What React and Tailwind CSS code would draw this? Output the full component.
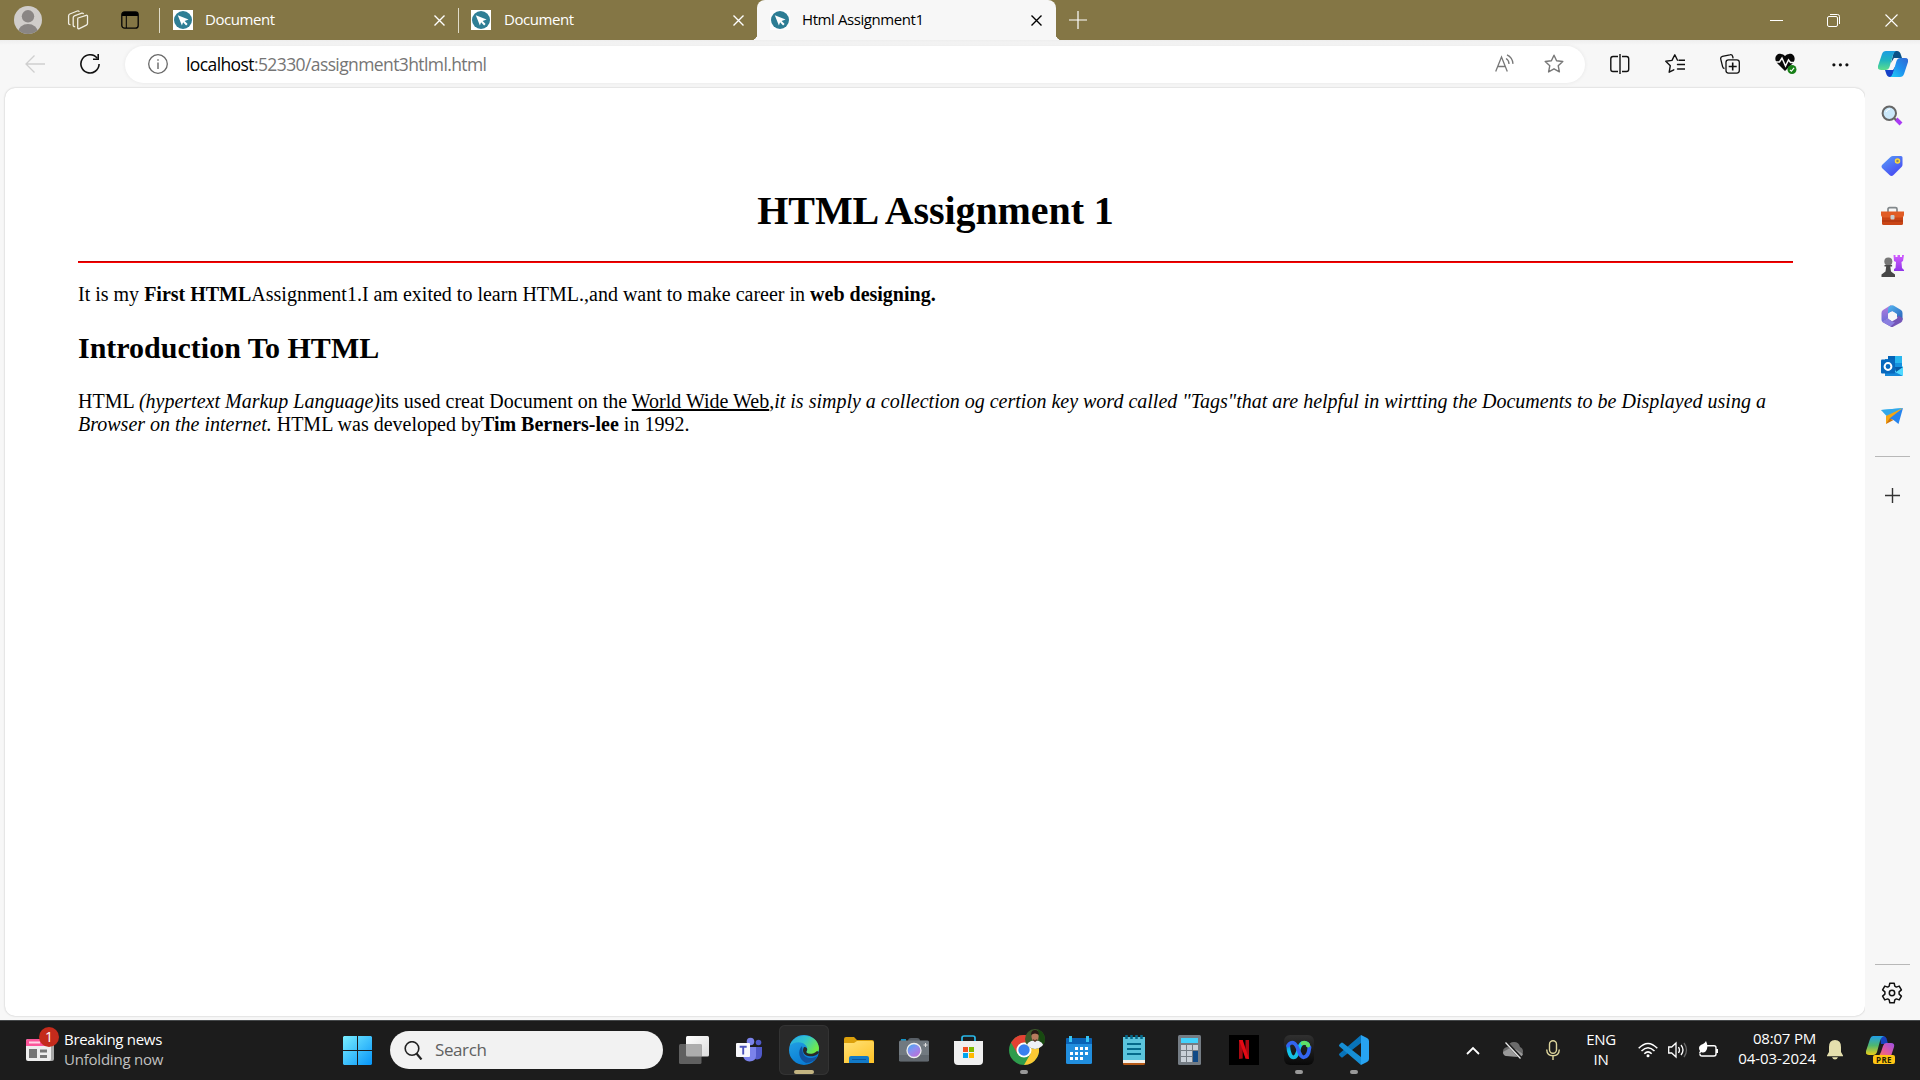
import React from "react";

function Svg({ w, h = w, className = "", children, ...rest }) {
  return (
    <svg width={w} height={h} viewBox={`0 0 ${w} ${h}`} fill="none" className={`block shrink-0 ${className}`} {...rest}>
      {children}
    </svg>
  );
}

function Favicon() {
  return (
    <Svg w={20}>
      <rect width="20" height="20" fill="#fff" />
      <circle cx="10" cy="10" r="9" fill="#2e7e95" />
      <path d="M4.8 5.2 15.6 9.4l-4 1.5 3 3-1.5 1.5-3-3.1-1.2 3.3z" fill="#fff" />
    </Svg>
  );
}

function Cross({ size = 11, stroke = 1.4 }) {
  return (
    <Svg w={size}>
      <path d={`M.5 .5 ${size - 0.5} ${size - 0.5}M${size - 0.5} .5 .5 ${size - 0.5}`} stroke="currentColor" strokeWidth={stroke} />
    </Svg>
  );
}

function Tab({ title, className, textClass }) {
  return (
    <div className={`relative flex h-10 shrink-0 items-center ${className}`}>
      <Favicon />
      <span className={`mb-[2px] flex-1 whitespace-nowrap text-[15px] leading-5 ${textClass}`}>{title}</span>
      <Cross />
    </div>
  );
}

function TitleBar() {
  return (
    <header className="flex h-10 shrink-0 bg-[#847645] text-white">
      <div className="flex w-[159px] shrink-0 items-center">
        <Svg w={28} className="ml-[14px]">
          <clipPath id="avatar"><circle cx="14" cy="14" r="14" /></clipPath>
          <g clipPath="url(#avatar)">
            <rect width="28" height="28" fill="#d0cdca" />
            <circle cx="14" cy="10.3" r="6.2" fill="#8a8684" />
            <ellipse cx="14" cy="26.5" rx="10" ry="8.5" fill="#8a8684" />
          </g>
        </Svg>
        <Svg w={22} className="ml-[25px]" stroke="#f1eee4" strokeWidth="1.3" strokeLinejoin="round">
          <path d="m11 9 8.2-2.7c.9-.3 1.3.2 1.3 1v7.2c0 .8-.4 1.3-1.1 1.6l-7.1 3.5c-.9.4-1.6 0-1.6-.9v-8c0-.8 0-1.4.3-1.7z" />
          <path d="M8.2 17.5c-1.2.3-2-.2-2-1.2V8.8c0-1 .3-1.6 1.2-2l7.4-2.6c1-.3 1.5.2 1.6 1" />
          <path d="M3.5 15.6c-1.3.2-1.9-.4-1.9-1.4V7c0-1 .3-1.6 1.2-2l7.5-3c1-.4 1.8 0 1.9.9" />
        </Svg>
        <Svg w={18} className="ml-[32px]">
          <rect x=".8" y=".8" width="16.4" height="16.4" rx="2.8" stroke="#050505" strokeWidth="1.3" />
          <path d="M1 5V3Q1 1 3 1h12q2 0 2 2v2z" fill="#000" />
          <path d="M5.3 5v12" stroke="#000" />
        </Svg>
      </div>
      <Tab title="Document" className="w-[299px] pl-[14px] pr-[13px] before:absolute before:left-0 before:top-2 before:h-[25px] before:w-px before:bg-[#e0dcc9]" textClass="ml-3 tracking-[-0.45px]" />
      <Tab title="Document" className="w-[299px] pl-[13px] pr-[13px] before:absolute before:left-0 before:top-2 before:h-[25px] before:w-px before:bg-[#e0dcc9]" textClass="ml-[13px] tracking-[-0.45px]" />
      <div className="relative h-10 shrink-0 rounded-t-lg bg-[#f7f7f7] text-black">
        <span className="absolute -left-[6px] bottom-0 size-[6px] bg-[radial-gradient(circle_at_0_0,transparent_6px,#f7f7f7_6.5px)]" />
        <span className="absolute -right-[6px] bottom-0 size-[6px] bg-[radial-gradient(circle_at_100%_0,transparent_6px,#f7f7f7_6.5px)]" />
        <Tab title="Html Assignment1" className="w-[299px] pl-[13px] pr-[14px]" textClass="ml-3 tracking-[-0.42px]" />
      </div>
      <div className="flex flex-1 items-center pl-[13px]">
        <Svg w={18}><path d="M9 0v18M0 9h18" stroke="#fff" strokeWidth="1.2" /></Svg>
      </div>
      <div className="flex items-center pr-[22px] text-white">
        <Svg w={13} className="mr-[44px]"><path d="M0 6.5h13" stroke="#fff" /></Svg>
        <Svg w={13} className="mr-[45px]" stroke="#fff">
          <rect x=".5" y="2.5" width="10" height="10" rx="1.5" />
          <path d="M3 .5h7.5q2 0 2 2V10" />
        </Svg>
        <Cross size={13} stroke={1.1} />
      </div>
    </header>
  );
}

const STAR = "m10 1.2 2.6 5.6 6.2.7-4.6 4.2 1.2 6.2L10 14.8l-5.4 3.1 1.2-6.2L1.2 7.5l6.2-.7z";

function Toolbar() {
  return (
    <div className="flex h-12 shrink-0 items-center bg-[linear-gradient(#eeeeee,#f7f7f7_5px)]">
      <Svg w={20} className="ml-[25px]"><path d="M20 10H1M9.5 1.5 1 10l8.5 8.5" stroke="#cfcfcf" strokeWidth="1.3" /></Svg>
      <Svg w={20} className="ml-[35px]" stroke="#111" strokeWidth="1.6">
        <path d="M17.2 4.3A9.1 9.1 0 1 0 19.1 10" />
        <path d="M18.2 0v5.2H13" />
      </Svg>
      <div className="ml-[25px] flex h-[37px] w-[1460px] items-center rounded-full bg-white shadow-[0_0_4px_rgba(0,0,0,0.07)]">
        <Svg w={20} className="ml-[23px]" stroke="#686868">
          <circle cx="10" cy="10" r="9.3" strokeWidth="1.3" />
          <path d="M10 8.6V15M10 5.2v1.6" strokeWidth="1.4" />
        </Svg>
        <span className="mb-px ml-[18px] flex-1 whitespace-nowrap text-[17.5px] leading-6 tracking-[-0.6px] text-[#757575]">
          <span className="text-black">localhost</span>:52330/assignment3htlml.html
        </span>
        <Svg w={20} className="mr-[29px]" stroke="#777" strokeWidth="1.3">
          <path d="M.7 17.5 6.5 3l5.8 14.5M2.8 12.5h7.4M11 4.5q3 1.700 3 5.500M12 .9q5.500 2.500 6 9" />
        </Svg>
        <Svg w={20} className="mr-[21px]"><path d={STAR} stroke="#777" strokeWidth="1.4" strokeLinejoin="round" /></Svg>
      </div>
      <div className="flex items-center pl-[25px] text-black">
        <Svg w={20} stroke="#111" strokeWidth="1.4">
          <path d="M8 2.500H3q-2.200 0-2.200 2.200v10.600q0 2.200 2.200 2.200h5M12 2.500h4.500q2.200 0 2.200 2.200v10.600q0 2.200-2.200 2.200H12M10 0v20" />
        </Svg>
        <Svg w={20} className="ml-[35px]" stroke="#111" strokeWidth="1.400" strokeLinejoin="round" strokeLinecap="round">
          <path d="M12.500 6.200 9.800.8 7 6.400l-6.200.9 4.500 4.400-1.100 6.500 4.600-2.400M14 6.200h6M12.500 10.500H20M12.500 15H20" />
        </Svg>
        <Svg w={20} className="ml-[35px]" stroke="#111" strokeWidth="1.300">
          <path d="M4.500 14.500c-1.200-.1-1.600-.7-1.900-1.900L.8 5.300c-.4-1.600.1-2.500 1.600-2.900L9.800.8c1.600-.4 2.500.2 2.900 1.700l.4 1.900" />
          <rect x="6" y="5.800" width="13.300" height="13.300" rx="2.500" />
          <path d="M12.700 8.500v8M8.700 12.500h8" strokeWidth="1.600" />
        </Svg>
        <Svg w={22} className="ml-[35px]">
          <path d="M10 18 2 10C-2 5 2 0 6 1q2.300.2 4 2 1.700-1.800 4-2c4-1 8 4 4 9z" fill="#080808" />
          <path d="M0 9h4.500l2.500-4 3.500 8 3-6 2 2.500H20" stroke="#f7f7f7" strokeWidth="1.500" />
          <circle cx="17" cy="16.500" r="4.500" fill="#188018" />
          <path d="m14.900 16.800 1.500 1.300 2.700-3.200" stroke="#fff" strokeWidth="1.100" />
        </Svg>
        <Svg w={17} className="ml-[35px]"><g fill="#111"><circle cx="1.900" cy="8.800" r="1.600" /><circle cx="8.400" cy="8.800" r="1.600" /><circle cx="14.900" cy="8.800" r="1.600" /></g></Svg>
      </div>
    </div>
  );
}

function Page() {
  return (
    <main className="ml-[5px] h-[928px] w-[1860px] rounded-[10px] bg-white pl-[73px] pr-[72px] pt-[100px] font-['Liberation_Serif',serif] text-[20px] leading-[23px] text-black shadow-[0_0_2px_rgba(0,0,0,0.25)]">
      <h1 className="text-center text-[40px] font-bold leading-[46px] tracking-[-0.08px]">HTML Assignment 1</h1>
      <hr className="mt-[27px] h-[2px] border-0 border-t border-t-[#c80000] bg-[#ff0000]" />
      <p className="mt-[20px] whitespace-nowrap">
        It is my <b>First HTML</b>Assignment1.I am exited to learn HTML.,and want to make career in <b>web designing.</b>
      </p>
      <h2 className="mt-[25px] text-[30px] font-bold leading-[34px]">Introduction To HTML</h2>
      <p className="mt-[25px] whitespace-nowrap">
        HTML <i>(hypertext Markup Language)</i>its used creat Document on the <u className="decoration-2 underline-offset-1">World Wide Web</u>,
        <i>it is simply a collection og certion key word called "Tags"that are helpful in wirtting the Documents to be Displayed using a<br />Browser on the internet.</i> HTML was developed by<b>Tim Berners-lee</b> in 1992.
      </p>
    </main>
  );
}

function Sidebar() {
  return (
    <aside className="flex w-[55px] shrink-0 flex-col items-center bg-[linear-gradient(#eeeeee,#f7f7f7_5px)]">
      <Svg w={30} h={26} className="mt-[11px]">
        <defs>
          <linearGradient id="cpa" x1="0" y1="0" x2="0" y2="1"><stop stopColor="#1b9de2" /><stop offset=".5" stopColor="#20b5bf" /><stop offset="1" stopColor="#5dde8c" /></linearGradient>
          <linearGradient id="cpb" x1="1" y1="0" x2="0" y2="1"><stop stopColor="#3367d1" /><stop offset=".5" stopColor="#1e91ef" /><stop offset="1" stopColor="#20cff5" /></linearGradient>
        </defs>
        <path d="M16 0h3q3 0 4 4l1 3h-8l-3 5z" fill="#0a5287" />
        <path d="M14 26h-2q-3 0-4-4l-1-3h8l3-5z" fill="#1541c8" />
        <path d="M8 0h10q-2 1-3 4l-3.500 12q-1 3-4 3H3q-4 0-3-4L4 3q1-3 4-3z" fill="url(#cpa)" />
        <path d="M22 26H12q2-1 3-4l3.500-12q1-3 4-3H27q4 0 3 4l-4 12q-1 3-4 3z" fill="url(#cpb)" />
      </Svg>
      <div className="mr-px flex flex-col items-center gap-[28px] pt-[28px]">
        <Svg w={22}>
          <path d="m15 14 5 5" stroke="#aa3bf4" strokeWidth="4" strokeLinecap="butt" />
          <path d="m12.500 12.500 2.500 2.500" stroke="#666" strokeWidth="2" />
          <circle cx="8.300" cy="8.300" r="6.700" fill="#cbe8fa" stroke="#666" strokeWidth="2" />
          <path d="M5 7q1-2.500 4-3" stroke="#fff" />
        </Svg>
        <Svg w={22}>
          <defs><linearGradient id="tag" x2=".7" y2="1"><stop stopColor="#59a1f8" /><stop offset="1" stopColor="#4747f2" /></linearGradient></defs>
          <path d="M12 1h8q1.500 0 1.500 1.500v7q0 1.500-1 2.500l-8 8q-2 2-4 0l-7-6.500q-2-2 0-4l8-7.500q1-1 2.500-1z" fill="url(#tag)" />
          <circle cx="16.500" cy="6" r="2" fill="#8a8b69" stroke="#ffd83c" strokeWidth="1.500" />
        </Svg>
        <Svg w={23} h={22}>
          <path d="M7 7V4q0-1.300 1.500-1.300h6Q16 2.700 16 4v3" stroke="#82888b" strokeWidth="1.700" />
          <rect x="1" y="10" width="21" height="10" rx="1.500" fill="#c94516" />
          <path d="M0 6.500h23v3q0 3-3 3H3q-3 0-3-3z" fill="#e15c25" />
          <path d="M1 16h21" stroke="#a7330e" /><rect x="9.500" y="10" width="4" height="4.500" rx="1" fill="#c7ced0" />
        </Svg>
        <Svg w={23} h={22}>
          <defs><linearGradient id="rook" x2="0" y2="1"><stop stopColor="#d25cff" /><stop offset="1" stopColor="#8f36e8" /></linearGradient></defs>
          <path d="M12.500 0h2v2h2V0H19v2h2V0h2l-1 6-1.500 1 .5 6 2 2v1h-10v-2l1.500-1 .5-6-2-1z" fill="url(#rook)" />
          <circle cx="7.300" cy="6.500" r="4" fill="#777" />
          <path d="M3.500 10h7.600v1.500H9.300l.7 5 4 3V22H.5v-2.500l4-3 .7-5H3.500z" fill="#474747" />
        </Svg>
        <Svg w={22}>
          <defs>
            <linearGradient id="mb" x2="1" y2="1"><stop stopColor="#56b8f2" /><stop offset="1" stopColor="#285fb8" /></linearGradient>
            <linearGradient id="mp" x2="0" y2="1"><stop stopColor="#b87bdc" /><stop offset="1" stopColor="#6a6fd8" /></linearGradient>
          </defs>
          <path d="M10 0 2 5Q.5 6 .5 8v6.500q0 1.500 1 2.500l5.500-3.500V8.500L13 5z" fill="url(#mp)" />
          <path d="m8 1.500 2-1q1-.7 2.500 0L20 5q1.500 1 1.500 3v7L16 12V9L11 6 7 8.500V4q0-1.500 1-2.500z" fill="url(#mb)" />
          <path d="m1.500 17 5.500-3.500 4 3 5-3 1-3 4.500 2.500q.5 3-1.500 4.500l-7.500 4q-1.500 1-3 0z" fill="#7556b8" />
          <path d="m1.500 17 5.500-3.500 4 3 3 1-4.500 4z" fill="#8a7fe0" />
          <circle cx="11" cy="11" r="3.900" fill="#f7f7f7" />
        </Svg>
        <Svg w={22}>
          <path d="M7 1h14v20H4V4h3z" fill="#1490df" /><path d="M7 1h7v7H7z" fill="#0364b8" /><path d="M14 1h7v7h-7z" fill="#28b7ef" />
          <path d="M4 12h18v7q0 2-2 2H4z" fill="#1688d9" /><path d="m22 11-9 5.500 9 4.500z" fill="#50d9ff" /><path d="m14 12 8 0-7 5z" fill="#075ba6" />
          <rect y="4.500" width="14" height="14" rx="1" fill="#0868bd" />
          <circle cx="7" cy="11.500" r="3.400" stroke="#fff" strokeWidth="2" />
        </Svg>
        <Svg w={23} h={22}>
          <path d="M0 5 22 3 11 9.500z" fill="#45c0f5" /><path d="m0 5 6 6.500L22 3z" fill="#33a8ea" />
          <path d="M22 3 5 11v8z" fill="#f5a513" /><path d="M22 3 8.500 13.500l4 1.500 5 4z" fill="#2684ee" /><path d="m5 19 3.500-5.500 4 1.500z" fill="#cf730b" />
        </Svg>
      </div>
      <div className="mt-[29px] h-px w-[35px] bg-[#b8b8b8]" />
      <Svg w={15} className="mr-px mt-[31px]"><path d="M7.500 0v15M0 7.500h15" stroke="#333" strokeWidth="1.400" /></Svg>
      <div className="mt-auto h-px w-[35px] bg-[#b8b8b8]" />
      <Svg w={22} className="mb-[16px] mr-px mt-[17px]" stroke="#111" strokeWidth="1.500" strokeLinejoin="round">
        <path d="M8.800 1.200h4.400l.6 3 1.500.9 2.900-1 2.200 3.800-2.300 2v2.200l2.300 2-2.200 3.800-2.900-1-1.500.9-.6 3H8.800l-.6-3-1.500-.9-2.900 1-2.200-3.800 2.300-2V9.900l-2.300-2 2.200-3.800 2.900 1 1.500-.9z" />
        <circle cx="11" cy="11" r="2.700" />
      </Svg>
    </aside>
  );
}

function Slot({ indicator, active, children }) {
  return (
    <div className={`relative mr-[5px] flex h-[50px] w-[50px] shrink-0 items-center justify-center rounded-md ${active ? "bg-[#292929] ring-1 ring-inset ring-[#333333]" : ""}`}>
      {children}
      {active && <span className="absolute bottom-px h-1 w-5 rounded-full bg-[#c4b582]" />}
      {indicator && <span className="absolute bottom-px h-1 w-2 rounded-full bg-[#999999]" />}
    </div>
  );
}

function Apps() {
  return (
    <div className="ml-[6px] flex">
      <Slot><Svg w={30}>
        <defs><linearGradient id="tv" x2="1" y2="1"><stop stopColor="#fff" /><stop offset="1" stopColor="#dcdcdc" /></linearGradient></defs>
        <rect x="7" y="1" width="23" height="20.500" rx="1.500" fill="url(#tv)" /><rect y="9" width="22.500" height="20" rx="1.500" fill="#606060" /><path d="M7 9h15.500v12.500H8.500Q7 21.500 7 20z" fill="#adadad" />
      </Svg></Slot>
      <Slot><Svg w={30} className="mr-[2px]">
        <circle cx="17.500" cy="6.500" r="3.800" fill="#7b83eb" /><circle cx="25.500" cy="7.500" r="2.800" fill="#5059c9" />
        <path d="M20 12h9v7q0 5-5 5.500l-4-1z" fill="#5059c9" /><path d="M10 12h13v9q0 5-6.500 5.500Q11 26 10 21z" fill="#7b83eb" />
        <rect x="3" y="8" width="14" height="14" rx="1" fill="#f8f8fc" /><path d="M6.700 11.800h7M10.200 12v7.500" stroke="#4b53bc" strokeWidth="1.900" />
      </Svg></Slot>
      <Slot active><Svg w={30}>
        <defs>
          <linearGradient id="ea" x2="1" y2=".5"><stop stopColor="#26a9e6" /><stop offset=".5" stopColor="#32c5cd" /><stop offset="1" stopColor="#70ea4a" /></linearGradient>
          <linearGradient id="eb" x2=".5" y2="1"><stop stopColor="#27a7e6" /><stop offset="1" stopColor="#087bd4" /></linearGradient>
        </defs>
        <circle cx="15" cy="15" r="15" fill="url(#eb)" />
        <path d="M1 10.500C4-3 29-3 30 13c0 7-8 8-12 5.500-1-.7-1-1.300 0-2.500C20 8 8 4 1 10.500z" fill="url(#ea)" />
        <path d="M13 11c-5 5-3 14 4 17 5 0 10-3 11.500-7-7 4-14 2-15-5q0-3-.5-5z" fill="#1153a0" />
        <path d="M15 12c-2 3-1 8 4 9 4 1 7-.2 9-1.500q1.500-1 2-2.500l-2-1c-3 3-8 3.500-10 2-1-.7-.8-1.500 0-2.400q1-3.600-3-3.600z" fill="#292929" />
      </Svg></Slot>
      <Slot><Svg w={30}>
        <path d="M0 4q0-2 2-2h8l3 3h15q2 0 2 2v4H0z" fill="#dca00b" />
        <defs><linearGradient id="fo" x2=".7" y2="1"><stop stopColor="#ffe177" /><stop offset="1" stopColor="#ffc52d" /></linearGradient></defs>
        <path d="M0 8h10l3-2h15q2 0 2 2v20H0z" fill="url(#fo)" /><path d="M5 28v-5q0-2 2-2h16q2 0 2 2v5z" fill="#127ac8" /><path d="M8 24.500h14" stroke="#0a559d" />
      </Svg></Slot>
      <Slot><Svg w={30}>
        <path d="M2 4h5v3H2z" fill="#1492c5" /><path d="M9 6q0-3 3-3h6q3 0 3 3z" fill="#596067" />
        <rect y="5.500" width="30" height="21" rx="1.500" fill="#717980" /><path d="M0 20h30v6H0z" fill="#626970" />
        <defs><linearGradient id="ln" x2=".7" y2="1"><stop stopColor="#32aef1" /><stop offset=".5" stopColor="#8a8ff0" /><stop offset="1" stopColor="#be6dd7" /></linearGradient></defs>
        <circle cx="15" cy="15.500" r="7" fill="url(#ln)" stroke="#eee" strokeWidth="1.300" /><path d="M26.500 8v4M24.500 10h4" stroke="#ddd" />
      </Svg></Slot>
      <Slot><Svg w={30}>
        <path d="M8 8V3q0-2 2-2h9q2 0 2 2v5" stroke="#28b8e9" strokeWidth="1.700" />
        <path d="M0 6h29v20q0 4-4 4H4q-4 0-4-4z" fill="#f0f0f0" />
        <path d="M9 12h5v5H9z" fill="#f25022" /><path d="M15 12h5v5h-5z" fill="#7fba00" /><path d="M9 18h5v5H9z" fill="#00a4ef" /><path d="M15 18h5v5h-5z" fill="#ffb900" />
      </Svg></Slot>
      <Slot indicator>
        <Svg w={30}>
          <circle cx="15" cy="15" r="15" fill="#2e9c4c" />
          <path d="M2 7.500A15 15 0 0 1 28 7.500H15L8.500 18.700z" fill="#e34133" /><path d="M15 7.500h13A15 15 0 0 1 15 30l6.500-11.300z" fill="#fbc934" />
          <circle cx="15" cy="15" r="7.500" fill="#fff" /><circle cx="15" cy="15" r="5.700" fill="#3980ee" />
        </Svg>
        <Svg w={20} className="absolute right-[4px] top-[4px]">
          <clipPath id="photo"><circle cx="10" cy="10" r="10" /></clipPath>
          <g clipPath="url(#photo)">
            <rect width="20" height="20" fill="#3d5a2c" /><path d="M13 0h7v15h-5z" fill="#174910" /><path d="M1 20q0-8.500 9-8.500t9 8.500z" fill="#eef1f7" />
            <ellipse cx="10" cy="7.500" rx="3.500" ry="4.800" fill="#b87b5e" /><path d="M6 6q0-5 4-5t4 5q-4-3-8 0z" fill="#271916" /><path d="M8 10q2 2 4 0v1.500L10 13l-2-1.500z" fill="#5a382c" />
          </g>
        </Svg>
      </Slot>
      <Slot><Svg w={26} h={28} className="-mt-px">
        <rect y="2" width="26" height="26" rx="1.500" fill="#218ede" /><path d="M0 8V3.500Q0 2 1.500 2h23Q26 2 26 3.500V8z" fill="#0963b6" />
        <path d="M4.500 0v6M21.500 0v6" stroke="#37c5f4" strokeWidth="3" />
        <path d="M9 11h3v3H9zm5 0h3v3h-3zm5 0h3v3h-3zM4 16h3v3H4zm5 0h3v3H9zm5 0h3v3h-3zm5 0h3v3h-3zM4 21h3v3H4zm5 0h3v3H9zm5 0h3v3h-3z" fill="#fff" />
      </Svg></Slot>
      <Slot><Svg w={22} h={30}>
        <rect y="2" width="22" height="28" rx="1.500" fill="#b65a18" /><path d="M0 25h22v3H0z" fill="#f4f2eb" /><path d="M0 2h22v23H0z" fill="#5bc4dc" />
        <path d="M4 9h14M4 14h14M4 19h14" stroke="#056a8b" strokeWidth="2" /><path d="M3.500 0v4M8.500 0v4M13.500 0v4M18.500 0v4" stroke="#056a8b" strokeWidth="2.500" />
      </Svg></Slot>
      <Slot><Svg w={23} h={30}>
        <rect width="23" height="30" rx="1.500" fill="#747c84" /><path d="M3 3h17v5H3z" fill="#42d2fc" />
        <path d="M3 10h5v5H3zm6 0h5v5H9zm6 0h5v5h-5zM3 16h5v5H3zm6 0h5v5H9zM3 22h5v5H3zm6 0h5v5H9z" fill="#c9d0d8" /><path d="M15 16h5v11h-5z" fill="#104986" />
      </Svg></Slot>
      <Slot><Svg w={30}>
        <path d="M0 0h30v30H0z" fill="#000" /><path d="M10 5h3.700v18.500L10 24zM16.500 5H20v19l-3.500-.5z" fill="#a90912" /><path d="M10 5h3.700L20 24l-3.500-.5z" fill="#e50914" />
      </Svg></Slot>
      <Slot indicator><Svg w={30}>
        <defs>
          <linearGradient id="wa" x2="0" y2="1"><stop stopColor="#303030" /><stop offset="1" stopColor="#080808" /></linearGradient>
          <linearGradient id="wb" gradientUnits="userSpaceOnUse" x1="4" y1="8" x2="15" y2="24"><stop stopColor="#1670d9" /><stop offset=".4" stopColor="#10c8ec" /><stop offset="1" stopColor="#19b6d8" /></linearGradient>
        </defs>
        <rect width="30" height="30" rx="6" fill="url(#wa)" />
        <path d="M4.200 11c.3 6 2.300 11.300 5.300 11.300 3.500 0 4.500-6 6-10.500 1-3 2.500-4 4.500-4 2.500 0 3.800 1.200 4 2.500" stroke="url(#wb)" strokeWidth="3.800" strokeLinecap="round" />
        <path d="M18.500 8.300q1.500-.8 3-.3 2.500.8 2.700 2.500" stroke="#5fe066" strokeWidth="3.900" strokeLinecap="round" />
        <path d="M4.200 10.500C5 8 8 6.800 10.500 8.500c4.500 3 4 13.500 9 13.800 3.500 0 5.500-5 6-10" stroke="#3365f0" strokeWidth="3.800" strokeLinecap="round" />
        <circle cx="24.200" cy="10.500" r="2" fill="#5fe066" />
      </Svg></Slot>
      <Slot indicator><Svg w={30}>
        <path d="m22 0 6 3q2 1 2 3v18q0 2-2 3l-6 3z" fill="#27a3f1" /><path d="M22 0v8L4 22q-1 1-2 0L.5 20.500q-1-1 0-2z" fill="#0873b9" />
        <path d="M22 30v-8L4 8Q3 7 2 8L.5 9.500q-1 1 0 2z" fill="#168ed5" />
      </Svg></Slot>
    </div>
  );
}

function Tray() {
  return (
    <div className="ml-auto flex items-center text-white">
      <Svg w={14} h={9} className="mr-[23px]"><path d="m1 8 6-6 6 6" stroke="#fff" strokeWidth="1.800" /></Svg>
      <Svg w={20} h={18} className="mr-[23px]">
        <path d="M5 15Q0 15 0 10.500q0-4 4.500-4.500Q6 1 11 1q5 0 6 5 3 1 3 4.500t-4 5z" fill="#6b6b6b" /><path d="M3 15q-3-1-3-4l7-4q5 0 13 6-1 3-4 3z" fill="#999" /><path d="m3 1 15 16" stroke="#1c1c1c" strokeWidth="3" /><path d="m2.500 1.500 15 16" stroke="#eee" strokeWidth="1.200" />
      </Svg>
      <Svg w={14} h={20} className="mr-[23px]" stroke="#dcd49b" strokeWidth="1.400"><rect x="3.500" y=".7" width="7" height="12.500" rx="3.500" /><path d="M.7 9.500q.3 6.300 6.300 6.300t6.300-6.300M7 16v4" /></Svg>
      <div className="mb-[2px] mr-[19px] w-[36px] text-center text-[15px] leading-5 tracking-[-0.3px]"><div>ENG</div><div>IN</div></div>
      <Svg w={20} h={16} className="mr-[10px]" stroke="#fff" strokeWidth="1.500"><path d="M.7 6.300q9.300-9.800 18.600 0M3.500 9q6.500-6.600 13 0M6.300 11.700q3.700-3.700 7.400 0" /><circle cx="10" cy="13.700" r="1.500" fill="#fff" stroke="none" /></Svg>
      <Svg w={20} h={18} className="mr-[10px]" stroke="#fff" strokeWidth="1.300"><path d="M.7 6v6h3L8 16V2L3.700 6z" /><path d="M10.500 6q2 3 0 6M13 4q4 5 0 10" /><path d="M16 2q5 7 0 14" stroke="#666" /></Svg>
      <Svg w={20} h={18} className="mr-[20px]"><path d="M9 4.700h7q2 0 2 2V13q0 2-2 2H4q-2 0-2-2" stroke="#fff" strokeWidth="1.400" /><path d="M18 8h2v4h-2z" fill="#fff" /><path d="M8 0q2 4 1 8-2 5-6 3l-1 2-1-1 1-2q-3-5 3-7 2-1 3-3z" fill="#fff" /></Svg>
      <div className="mb-[4px] w-[78px] whitespace-nowrap text-right text-[15px] leading-5"><div className="tracking-[-0.2px]">08:07 PM</div><div className="tracking-[-0.05px]">04-03-2024</div></div>
      <Svg w={16} h={20} className="ml-[11px]"><path d="M0 15.500 2 12V7q0-7 6-7t6 7v5l2 3.500v.8H0z" fill="#e4dfad" /><path d="M5 17.200h6q-1 2.300-3 2.300t-3-2.300z" fill="#e4dfad" /></Svg>
      <div className="relative ml-[23px] mr-[25px]">
        <Svg w={29} h={28}>
          <defs>
            <linearGradient id="pa" x2="0" y2="1"><stop stopColor="#219fe7" /><stop offset=".5" stopColor="#4fb66f" /><stop offset="1" stopColor="#ebcf18" /></linearGradient>
            <linearGradient id="pb" x1="1" y1="0" x2="0" y2="1"><stop stopColor="#9c51e4" /><stop offset=".6" stopColor="#e45a9d" /><stop offset="1" stopColor="#f37c53" /></linearGradient>
          </defs>
          <path d="M14 0h3q3 0 4 4l1 4h-7z" fill="#1742bd" /><path d="M7 0h11q-3 1-4 5l-3 11q-1 3-4 3H3q-4 0-3-4L4 3q1-3 3-3z" fill="url(#pa)" />
          <path d="M20 7h5q4 0 3 4l-3 9H12q2-1 3-4l2-6q1-3 3-3z" fill="url(#pb)" /><rect x="7" y="19" width="22" height="9" rx="2" fill="#ffc514" />
        </Svg>
        <span className="absolute bottom-0 right-0 w-[22px] text-center text-[8px] font-bold leading-[9px] tracking-[0.4px] text-[#241d00]">PRE</span>
      </div>
    </div>
  );
}

function Taskbar() {
  return (
    <footer className="flex h-[60px] shrink-0 items-center bg-[#1c1c1c] shadow-[inset_0_1px_0_#45484a]">
      <div className="flex w-[343px] shrink-0 items-center">
        <div className="relative ml-[26px] w-[28px]">
          <Svg w={28} h={22}>
            <rect x="4" y="2" width="24" height="20" rx="2" fill="#a7a7a7" /><rect width="25" height="22" rx="2" fill="#eee" /><path d="M0 7V2q0-2 2-2h21q2 0 2 2v5z" fill="#fb5599" /><path d="M3 3.500h11" stroke="#ffd4e5" strokeWidth="2" />
            <path d="M3 10h8v9H3z" fill="#747474" /><path d="M14 12h7M14 17.500h7" stroke="#777" strokeWidth="3" />
          </Svg>
          <span className="absolute -top-[12px] left-[13px] flex size-5 items-center justify-center rounded-full bg-[#c42b1c] text-[14px] leading-none text-white">1</span>
        </div>
        <div className="mb-[3px] ml-[10px] whitespace-nowrap text-[15px] leading-5 tracking-[-0.3px] text-white"><div>Breaking news</div><div className="tracking-[-0.22px] text-[#c0c0c0]">Unfolding now</div></div>
      </div>
      <Svg w={29}>
        <defs><linearGradient id="win" gradientUnits="userSpaceOnUse" x2="29" y2="29"><stop stopColor="#79eeff" /><stop offset="1" stopColor="#0695f9" /></linearGradient></defs>
        <path d="M1 0h13v14H0V1zM15 0h13l1 1v13H15zM0 15h14v14H1l-1-1zM15 15h14v13l-1 1H15z" fill="url(#win)" />
      </Svg>
      <div className="ml-[18px] flex h-[38px] w-[273px] shrink-0 items-center rounded-full bg-[#f2f2f2]">
        <Svg w={19} className="ml-[14px]"><circle cx="8" cy="7.500" r="6.800" stroke="#222" strokeWidth="1.600" /><path d="m12.500 12.500 5 6" stroke="#222" strokeWidth="2.200" /></Svg>
        <span className="ml-[12px] text-[17px] leading-5 tracking-[-0.4px] text-[#606060]">Search</span>
      </div>
      <Apps />
      <Tray />
    </footer>
  );
}

export default function App() {
  return (
    <div className="flex h-screen w-full flex-col overflow-hidden bg-[#f7f7f7] font-['Open_Sans','Noto_Sans',sans-serif]">
      <TitleBar />
      <div className="flex h-[980px] shrink-0">
        <div className="flex w-[1865px] shrink-0 flex-col">
          <Toolbar />
          <Page />
        </div>
        <Sidebar />
      </div>
      <Taskbar />
    </div>
  );
}
